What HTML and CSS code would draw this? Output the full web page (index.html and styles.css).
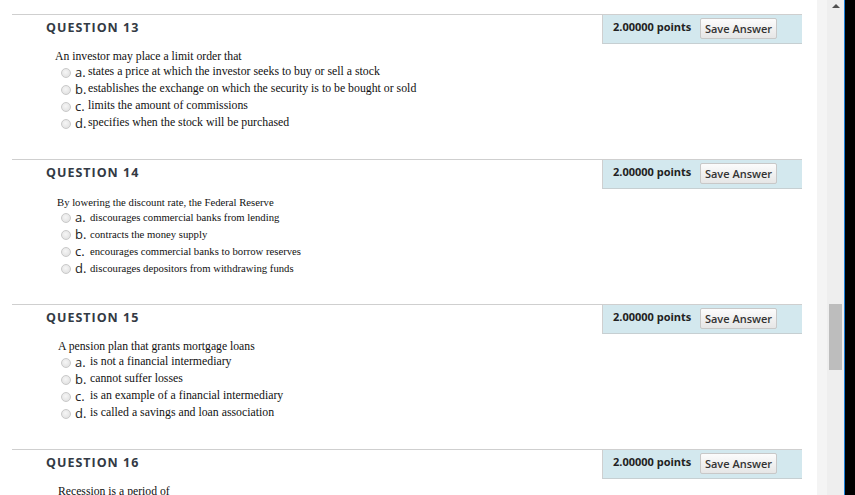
FILE: index.html
```html
<!DOCTYPE html>
<html lang="en">
<head>
  <meta charset="UTF-8">
  <title>Test</title>
  <link rel="stylesheet" href="styles.css">
</head>
<body>
  <div class="window">
    <div class="content">

      <div class="question">
        <div class="q-head">
          <h3>QUESTION 13</h3>
          <div class="points">2.00000 points <button class="save">Save Answer</button></div>
        </div>
        <div class="q-body">
          <p class="stem">An investor may place a limit order that</p>
          <ul class="choices">
            <li><span class="radio"></span><span class="letter">a.</span><span class="ans">states a price at which the investor seeks to buy or sell a stock</span></li>
            <li><span class="radio"></span><span class="letter">b.</span><span class="ans">establishes the exchange on which the security is to be bought or sold</span></li>
            <li><span class="radio"></span><span class="letter">c.</span><span class="ans">limits the amount of commissions</span></li>
            <li><span class="radio"></span><span class="letter">d.</span><span class="ans">specifies when the stock will be purchased</span></li>
          </ul>
        </div>
      </div>

      <div class="question">
        <div class="q-head">
          <h3>QUESTION 14</h3>
          <div class="points">2.00000 points <button class="save">Save Answer</button></div>
        </div>
        <div class="q-body small">
          <p class="stem">By lowering the discount rate, the Federal Reserve</p>
          <ul class="choices">
            <li><span class="radio"></span><span class="letter">a.</span><span class="ans">discourages commercial banks from lending</span></li>
            <li><span class="radio"></span><span class="letter">b.</span><span class="ans">contracts the money supply</span></li>
            <li><span class="radio"></span><span class="letter">c.</span><span class="ans">encourages commercial banks to borrow reserves</span></li>
            <li><span class="radio"></span><span class="letter">d.</span><span class="ans">discourages depositors from withdrawing funds</span></li>
          </ul>
        </div>
      </div>

      <div class="question">
        <div class="q-head">
          <h3>QUESTION 15</h3>
          <div class="points">2.00000 points <button class="save">Save Answer</button></div>
        </div>
        <div class="q-body wide">
          <p class="stem">A pension plan that grants mortgage loans</p>
          <ul class="choices">
            <li><span class="radio"></span><span class="letter">a.</span><span class="ans">is not a financial intermediary</span></li>
            <li><span class="radio"></span><span class="letter">b.</span><span class="ans">cannot suffer losses</span></li>
            <li><span class="radio"></span><span class="letter">c.</span><span class="ans">is an example of a financial intermediary</span></li>
            <li><span class="radio"></span><span class="letter">d.</span><span class="ans">is called a savings and loan association</span></li>
          </ul>
        </div>
      </div>

      <div class="question">
        <div class="q-head">
          <h3>QUESTION 16</h3>
          <div class="points">2.00000 points <button class="save">Save Answer</button></div>
        </div>
        <div class="q-body wide">
          <p class="stem">Recession is a period of</p>
        </div>
      </div>

    </div>
    <div class="strip"></div>
    <div class="scrollbar">
      <div class="arrow"></div>
      <div class="thumb"></div>
    </div>
    <div class="edge"></div>
  </div>
</body>
</html>
```

FILE: styles.css
```css
body {
  margin: 0;
  padding: 0;
  background-color: #fff;
  font-family: "Open Sans", Arial, sans-serif;
  color: #333;
}

.window {
  display: flex;
  height: 495px;
  overflow: hidden;
}

.content {
  width: 790px;
  padding: 14px 15px 0 12px;
}

.strip {
  width: 10px;
  background-color: #f4f4f4;
}

.scrollbar {
  width: 17px;
  background-color: #eeeeee;
  position: relative;
}

.arrow {
  position: absolute;
  left: 5px;
  top: 4px;
  width: 0;
  height: 0;
  border-left: 4px solid transparent;
  border-right: 4px solid transparent;
  border-bottom: 4px solid #505050;
}

.thumb {
  position: absolute;
  left: 2px;
  top: 304px;
  width: 13px;
  height: 66px;
  background-color: #bdbdbd;
}

.edge {
  width: 10px;
  background-color: #000;
  border-left: 1px solid #1a7fd8;
}

.question {
  height: 144px;
  border-top: 1px solid #cfcfcf;
}

.q-head {
  display: flex;
  justify-content: space-between;
  height: 29px;
}

.q-head h3 {
  margin: 0;
  padding: 4px 0 0 34px;
  font-size: 12.5px;
  font-weight: bold;
  letter-spacing: 1px;
  color: #333a44;
}

.points {
  box-sizing: border-box;
  width: 200px;
  padding: 0 25px 5px 10px;
  display: flex;
  align-items: center;
  justify-content: space-between;
  background-color: #d3e8ee;
  border-left: 1px solid #cfcfcf;
  border-bottom: 1px solid #c6cfd2;
  font-size: 11px;
  font-weight: bold;
  color: #222;
}

.save {
  font-family: "Open Sans", Arial, sans-serif;
  font-size: 11px;
  font-weight: 600;
  color: #333;
  height: 21px;
  width: 77px;
  padding: 0;
  margin-top: 3px;
  background: linear-gradient(#fcfcfc, #e6e6e6);
  border: 1px solid #c8c8c8;
  border-radius: 2px;
}

.q-body {
  padding: 5px 0 0 43px;
  font-family: "Liberation Serif", "Times New Roman", serif;
  color: #111;
}

.stem {
  margin: 0;
  font-size: 11.7px;
  line-height: 16px;
}

.choices {
  list-style: none;
  margin: 0;
  padding: 0 0 0 5px;
}

.choices li {
  display: flex;
  align-items: center;
  height: 17px;
  font-size: 11.8px;
}

.choices li:first-child {
  margin-top: -2px;
}

.radio {
  box-sizing: border-box;
  width: 10px;
  height: 10px;
  border-radius: 50%;
  border: 1px solid #c9c9c9;
  background: radial-gradient(circle at 45% 40%, #f6f6f6, #dcdcdc);
  margin: 3px 4px 0 1px;
}

.letter {
  font-family: "Open Sans", Arial, sans-serif;
  font-size: 13px;
  color: #222;
  width: 13px;
}

.small .stem {
  font-size: 10.7px;
  padding-left: 2px;
}

.small .choices li {
  font-size: 10.7px;
}

.wide .stem {
  padding-left: 3px;
}

.small .letter,
.wide .letter {
  width: 15px;
}
```
